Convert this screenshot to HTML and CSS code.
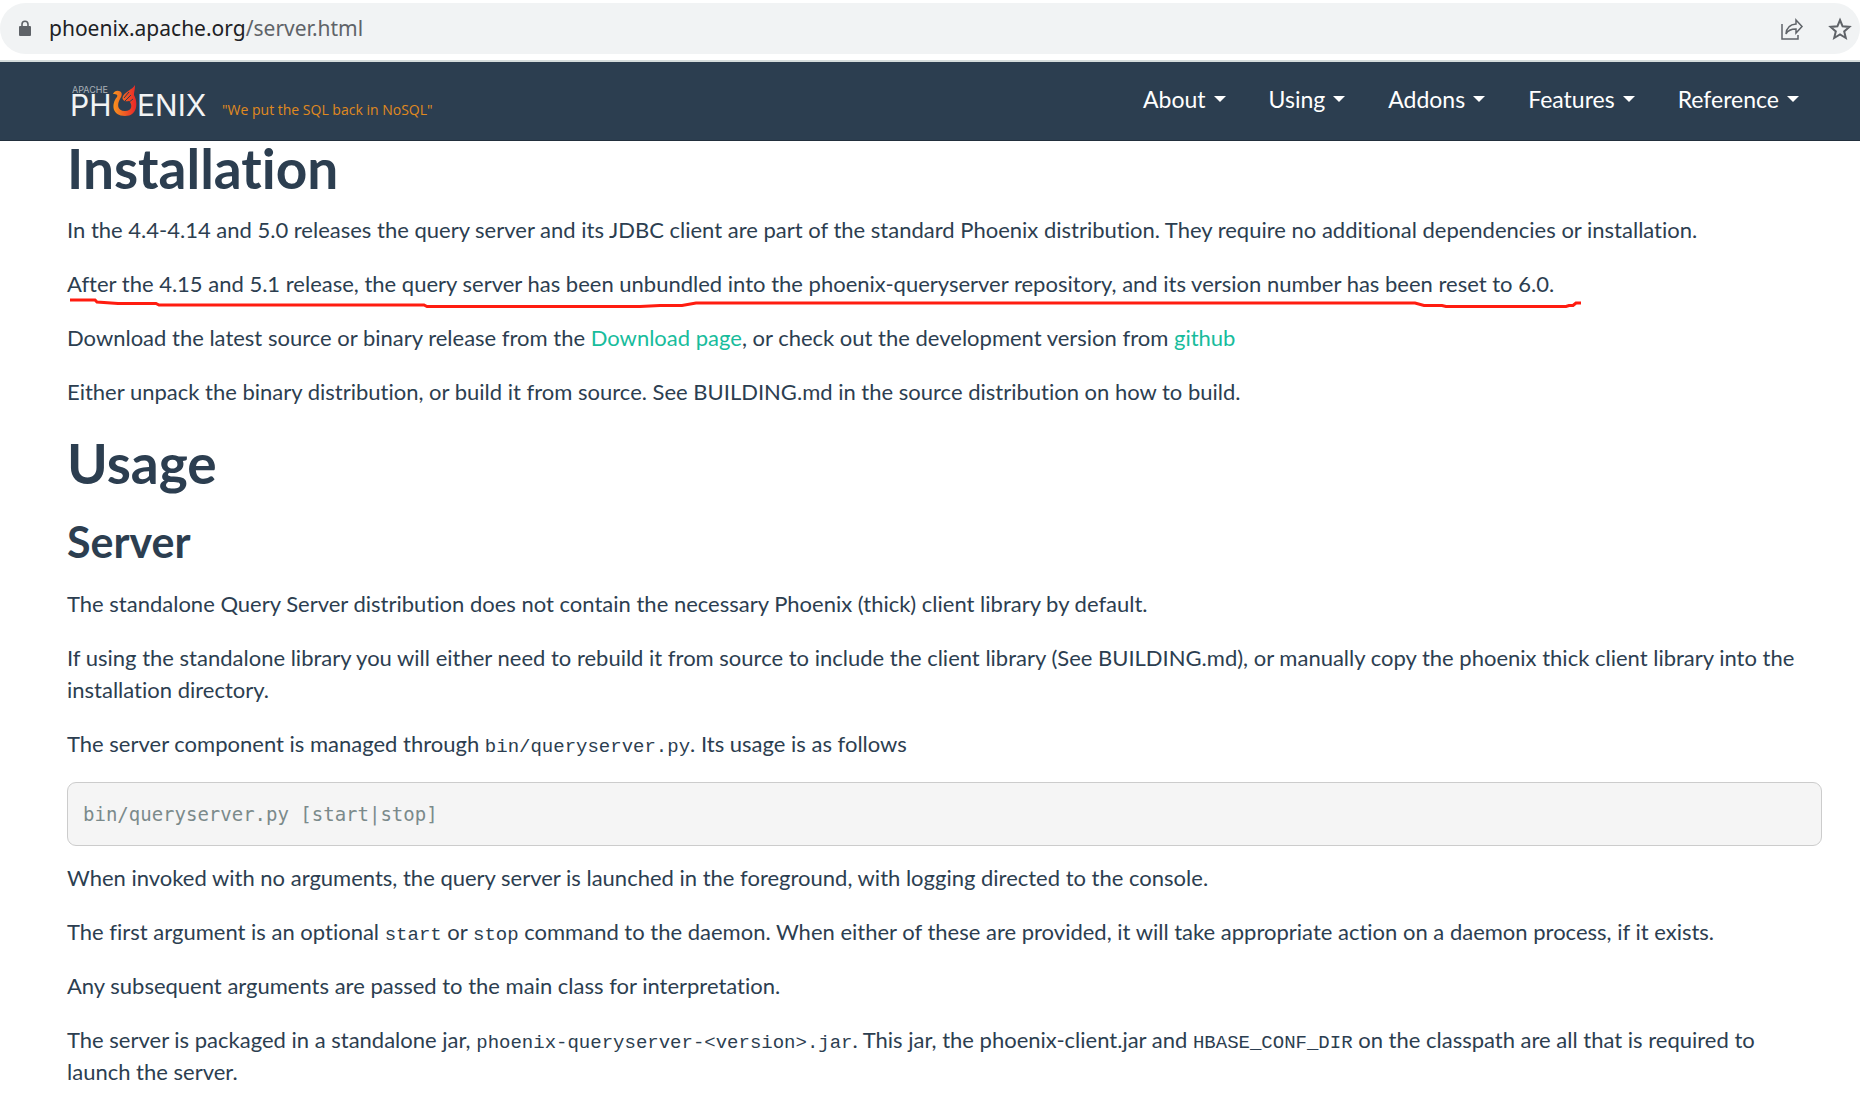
FILE: index.html
```html
<!DOCTYPE html>
<html lang="en">
<head>
<meta charset="utf-8">
<title>Query Server | Apache Phoenix</title>
<link rel="stylesheet" href="styles.css">
</head>
<body>
<div class="toolbar">
  <div class="address">
    <svg class="lock" viewBox="0 0 12 17" width="12" height="17" aria-hidden="true"><path d="M3 7V4.200a3 3 0 0 1 6 0V7" fill="none" stroke="#5f6368" stroke-width="1.600"/><rect x="0" y="6" width="12" height="10" rx="1" fill="#5f6368"/></svg>
    <p class="url">phoenix.apache.org<span class="path">/server.html</span></p>
    <button class="tool" type="button" aria-label="Share"><svg viewBox="0 0 24 24" width="24" height="24" fill="none" stroke="#5f6368" stroke-width="1.500"><path d="M2 7v15h16v-4"/><path d="M16 3l6 6.500-6 6.500v-4c-5 0-8 1-10 5 .4-5.500 3.500-9.500 10-10z"/></svg></button>
    <button class="tool" type="button" aria-label="Bookmark"><svg viewBox="0 0 24 24" width="24" height="24" fill="none" stroke="#5f6368" stroke-width="2"><path d="M12 3l2.600 6.300 6.800.600-5.200 4.500 1.600 6.600-5.800-3.500L6.200 21l1.600-6.600-5.200-4.500 6.800-.600z"/></svg></button>
  </div>
</div>
<header class="navbar">
  <a class="brand" href="#">
    <svg class="logo" viewBox="0 0 140 38" width="140" height="38" role="img" aria-label="Apache Phoenix">
      <defs><linearGradient id="flame" x1="0" x2="1" y1="0" y2="0"><stop offset="0" stop-color="#f7941e"/><stop offset="1" stop-color="#e8252a"/></linearGradient></defs>
      <text class="logo-small" x="1" y="9">APACHE</text>
      <text class="logo-big" x="-1" y="32">PH</text>
      <text class="logo-big" x="66" y="32">ENIX</text>
      <path fill="url(#flame)" d="M42 10q2-4 6-3c4 1 3 5 1 8-3 5-3 12 5 12 7 0 8-6 4-10-4 1-8-1-6-5 3-5 9-6 12-11 0 5-1 7-1 10 4 7 4 21-9 21-13 0-14-12-8-19 1-2 0-3-4-3z"/>
      <path d="M53 14l5-6M54 17l6-6M57 19l5-4" stroke="#2c3e50" fill="none"/>
    </svg>
    <span class="slogan">"We put the SQL back in NoSQL"</span>
  </a>
  <nav class="menu">
    <button class="item" type="button">About</button>
    <button class="item" type="button">Using</button>
    <button class="item" type="button">Addons</button>
    <button class="item" type="button">Features</button>
    <button class="item" type="button">Reference</button>
  </nav>
</header>
<main class="content">
  <h1>Installation</h1>
  <p>In the 4.4-4.14 and 5.0 releases the query server and its JDBC client are part of the standard Phoenix distribution. They require no additional dependencies or installation.</p>
  <p class="marked">After the 4.15 and 5.1 release, the query server has been unbundled into the phoenix-queryserver repository, and its version number has been reset to 6.0.<svg class="stroke" viewBox="0 0 1512 12" width="1512" height="12" fill="none" stroke="#ff1c10" stroke-width="3" aria-hidden="true"><path d="M0 2H25L27 4 48 5.500H86L89 7H354L357 8.500H570L590 7.500H612L626 5H1345L1354 7.500H1372L1376 8.500H1496L1499 7.500H1503L1506 5H1511"/></svg></p>
  <p>Download the latest source or binary release from the <a href="#">Download page</a>, or check out the development version from <a href="#">github</a></p>
  <p>Either unpack the binary distribution, or build it from source. See BUILDING.md in the source distribution on how to build.</p>
  <h1>Usage</h1>
  <h2>Server</h2>
  <p>The standalone Query Server distribution does not contain the necessary Phoenix (thick) client library by default.</p>
  <p>If using the standalone library you will either need to rebuild it from source to include the client library (See BUILDING.md), or manually copy the phoenix thick client library into the installation directory.</p>
  <p>The server component is managed through <code>bin/queryserver.py</code>. Its usage is as follows</p>
  <pre>bin/queryserver.py [start|stop]</pre>
  <p>When invoked with no arguments, the query server is launched in the foreground, with logging directed to the console.</p>
  <p>The first argument is an optional <code>start</code> or <code>stop</code> command to the daemon. When either of these are provided, it will take appropriate action on a daemon process, if it exists.</p>
  <p>Any subsequent arguments are passed to the main class for interpretation.</p>
  <p>The server is packaged in a standalone jar, <code>phoenix-queryserver-&lt;version&gt;.jar</code>. This jar, the phoenix-client.jar and <code>HBASE_CONF_DIR</code> on the classpath are all that is required to launch the server.</p>
</main>
</body>
</html>
```
FILE: styles.css
```css
* { box-sizing: border-box; }
body { margin: 0; background: #fff; color: #2c3e50; font: 22px/32px Lato, sans-serif; font-variant-ligatures: no-common-ligatures; }
button { border: 0; padding: 0; background: none; color: inherit; font: inherit; cursor: pointer; }

.toolbar { padding: 3px 0 6px; border-bottom: 2px solid #d5dcdc; }
.address { display: flex; align-items: center; height: 51px; padding: 0 8px 0 19px; border-radius: 26px; background: #f1f3f4; }
.url { flex: 1; margin: 0 0 2px 18px; color: #202124; font: 21px/30px "Noto Sans", sans-serif; }
.path { color: #5f6368; }
.tool { display: flex; margin-left: 24px; }

.navbar { display: flex; justify-content: space-between; height: 79px; padding: 0 61px 0 71px; border-bottom: 1px solid #222f3d; background: #2c3e50; color: #fff; }
.brand { display: flex; align-items: flex-start; gap: 11px; padding-top: 22px; color: #e08a1e; text-decoration: none; }
.logo-small { font: 9px Inter, sans-serif; fill: #aab2b9; }
.logo-big { font: 400 30px Inter, sans-serif; fill: #f2f4f5; }
.slogan { padding-top: 16px; font: 14px/20px "Open Sans", sans-serif; }
.menu { display: flex; gap: 43px; padding-bottom: 4px; font-size: 23px; }
.item { display: flex; align-items: center; gap: 8px; }
.item::after { content: ""; border: 6px solid transparent; border-top-color: #fff; border-bottom: 0; }

.content { padding: 0 38px 0 67px; }
h1, h2, p, pre { margin: 0; }
h1 { padding-bottom: 19px; font-size: 55px; line-height: 54px; }
h2 { padding: 4px 0 17px; font-size: 43px; line-height: 58px; }
p { margin-bottom: 22px; }
p + h1 { margin-top: 28px; }
a { color: #18bc9c; text-decoration: none; }
.marked { position: relative; }
.stroke { position: absolute; left: 3px; top: 30px; }
code { font: 19px/22px "Liberation Mono", monospace; }
pre { margin-bottom: 16px; padding: 15px; border: 1px solid #ccc; border-radius: 9px; background: #f5f5f5; color: #7b8a8b; font: 19px/32px "DejaVu Sans Mono", monospace; }
```
